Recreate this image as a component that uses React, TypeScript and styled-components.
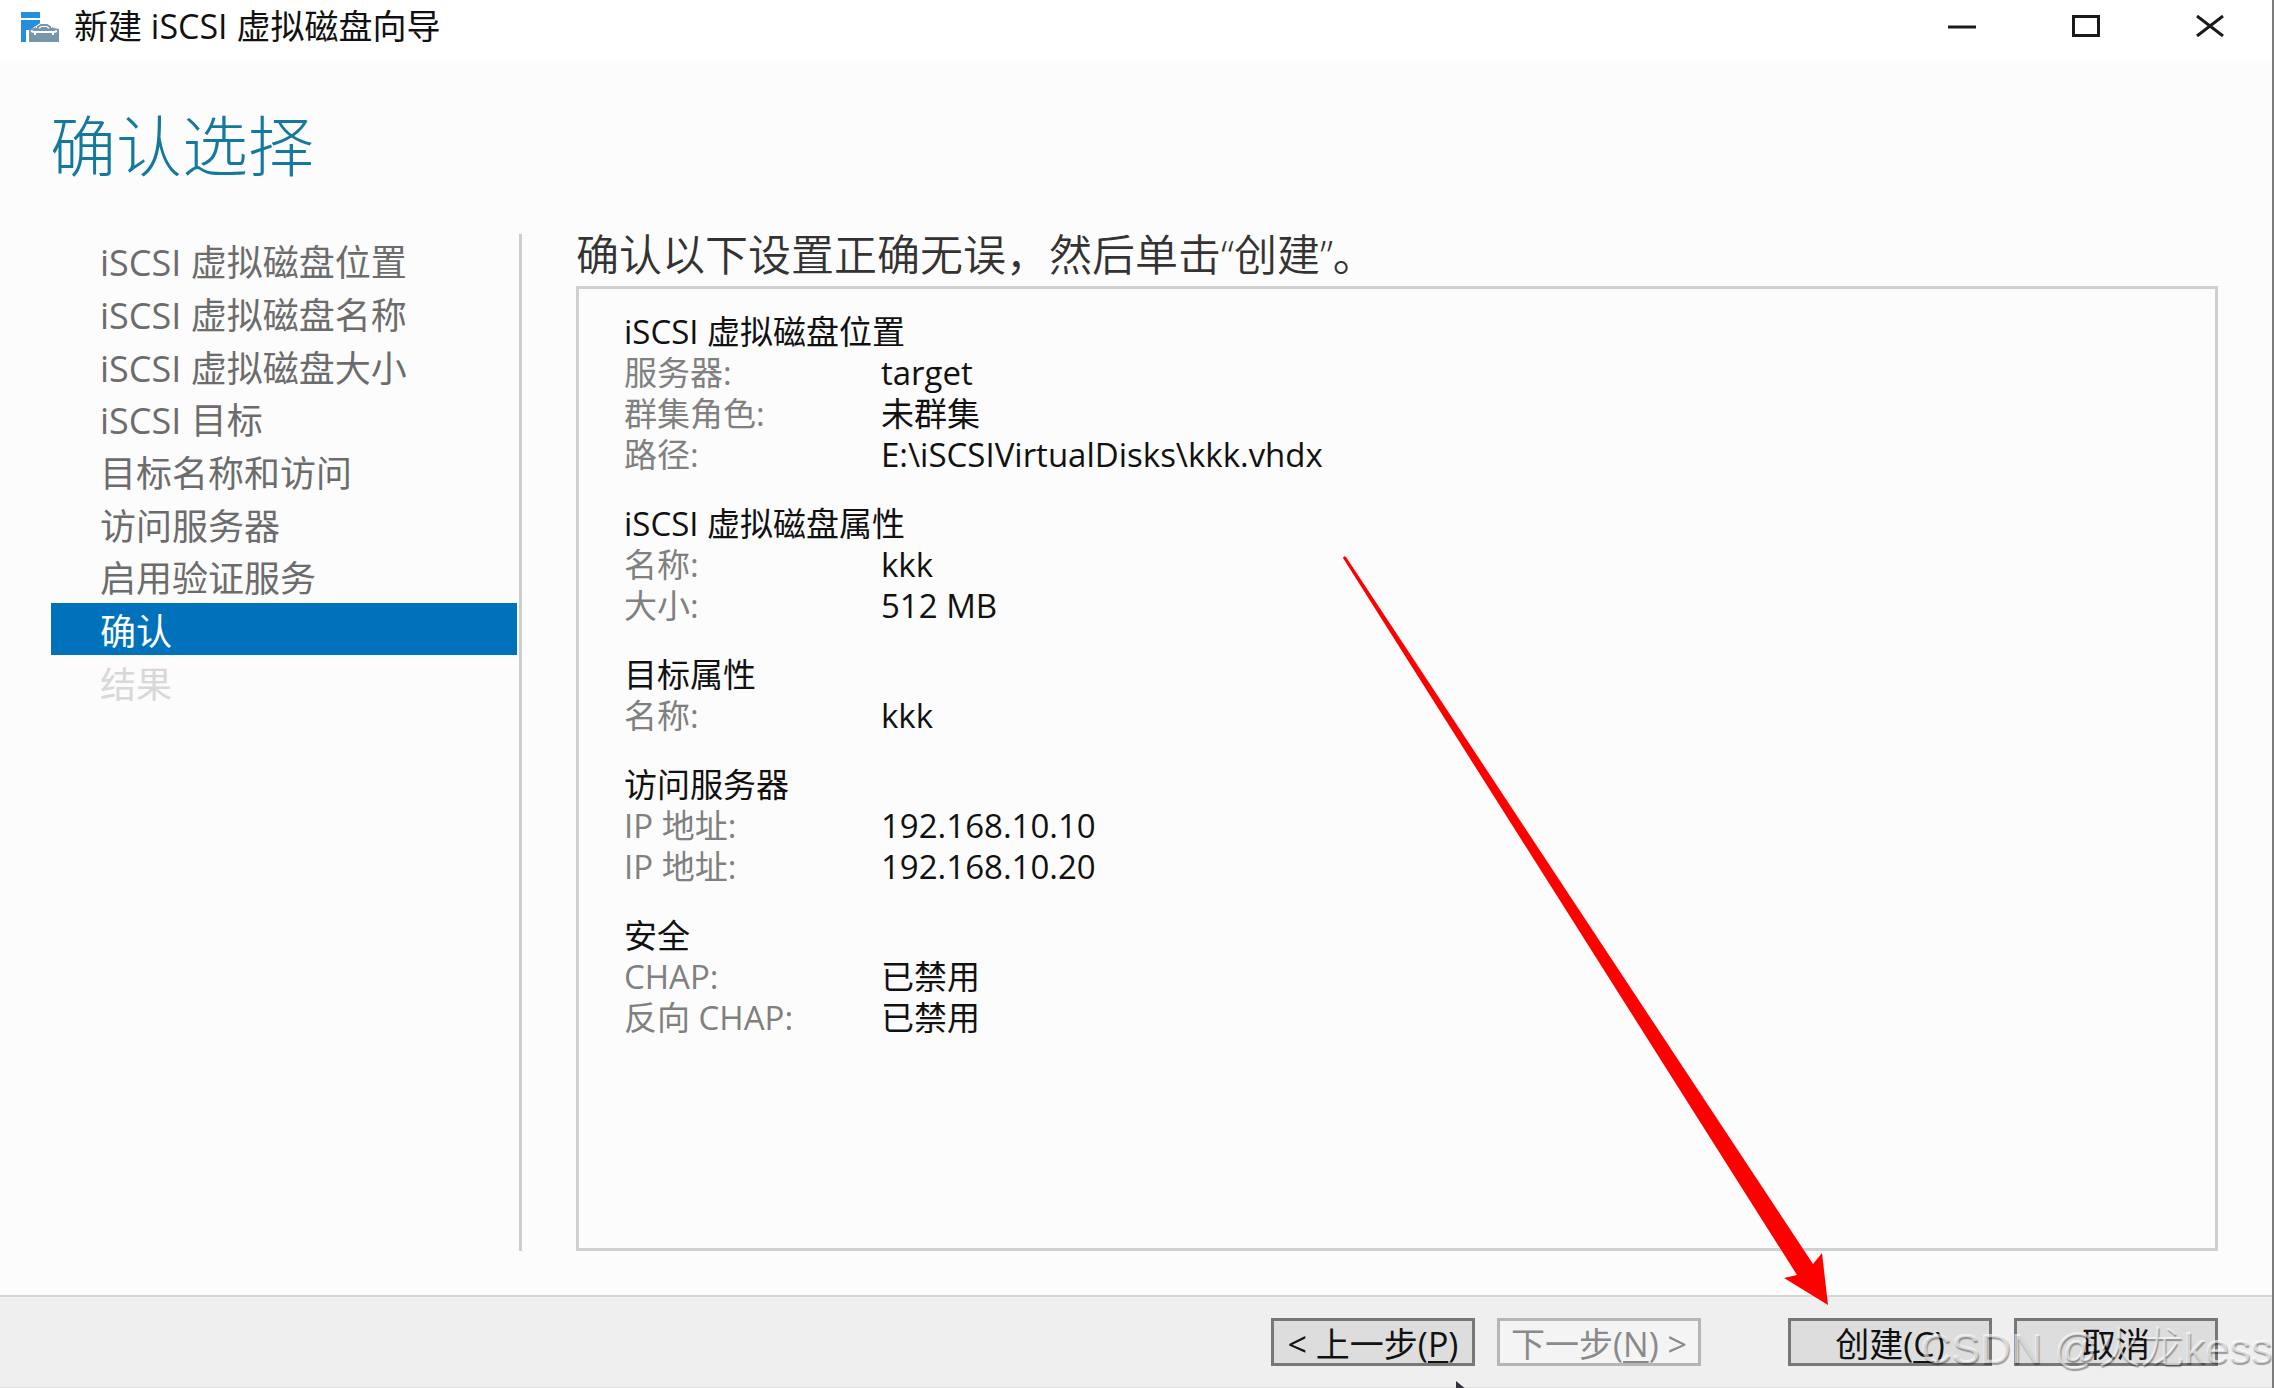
import React from "react";
import styled, { createGlobalStyle } from "styled-components";

const GlobalStyle = createGlobalStyle`
  *, *::before, *::after { box-sizing: border-box; }
  html, body { margin: 0; padding: 0; }
  body {
    font-family: "Open Sans", "Noto Sans CJK SC", sans-serif;
    color: #111;
    background: #fcfcfc;
  }
  h1, h2, p, dl, dt, dd, ol { margin: 0; padding: 0; font-weight: 400; }
`;

const Window = styled.div`
  position: relative;
  display: flex;
  flex-direction: column;
  min-height: 100vh;
  overflow: hidden;
  background: #fcfcfc;
  border-right: 2px solid #7b7b7b;
`;

const TitleBar = styled.header`
  display: flex;
  align-items: center;
  height: 61px;
  padding-left: 20px;
  background: #fff;
`;

const AppIcon = styled.svg`
  width: 40px;
  height: 32px;
  margin: 0 14px 8px 0;
`;

const AppTitle = styled.span`
  flex: 1;
  height: 54px;
  font-size: 34px;
  line-height: 44px;
`;

const CaptionButton = styled.button`
  display: flex;
  justify-content: center;
  width: 124px;
  height: 61px;
  padding: 15px 0 0;
  border: 0;
  background: transparent;
`;

const Glyph = styled.svg`
  width: 28px;
  height: 22px;
  fill: none;
  stroke: #1a1a1a;
  stroke-width: 3;
`;

const PageTitle = styled.h1`
  padding: 44px 0 0 50px;
  color: #14799c;
  font-size: 66px;
  font-weight: 300;
  line-height: 80px;
`;

const Body = styled.main`
  display: flex;
  flex: 1;
  padding: 49px 54px 44px 51px;
`;

const Steps = styled.nav`
  width: 471px;
  flex: none;
  padding-right: 2px;
  border-right: 3px solid #cdcdcd;
`;

const StepList = styled.ol`
  display: grid;
  grid-auto-rows: 1fr;
  height: 474px;
  list-style: none;
`;

type StepState = "done" | "current" | "pending";

const stepInk: Record<StepState, string> = {
  done: "#6c6c6c",
  current: "#fff",
  pending: "#d8d8d8",
};

const Step = styled.li<{ $state: StepState }>`
  display: flex;
  align-items: center;
  padding: 6px 0 0 49px;
  background: ${(p) => (p.$state === "current" ? "#0072bc" : "transparent")};
  color: ${(p) => stepInk[p.$state]};
  font-size: 36px;
  line-height: 44px;
  white-space: nowrap;
`;

const Content = styled.section`
  display: flex;
  flex: 1;
  flex-direction: column;
  min-width: 0;
  padding-left: 54px;
`;

const Instruction = styled.p`
  height: 52px;
  color: #333;
  font-size: 43px;
  font-weight: 350;
  line-height: 42px;
  white-space: nowrap;
`;

const Summary = styled.div`
  display: flex;
  flex: 1;
  flex-direction: column;
  gap: 28px;
  padding: 22px 45px;
  border: 3px solid #d0d0d0;
  font-size: 33px;
  line-height: 41px;
`;

const GroupTitle = styled.h2`
  font-size: 33px;
  line-height: 41px;
`;

const Fields = styled.dl`
  display: grid;
  grid-template-columns: 257px 1fr;
`;

const FieldName = styled.dt`
  color: #808080;
`;

const FieldValue = styled.dd`
  color: #111;
`;

const Footer = styled.footer`
  display: flex;
  justify-content: flex-end;
  gap: 22px;
  height: 93px;
  padding: 21px 54px 0;
  border-top: 2px solid #d6d6d6;
  border-bottom: 1px solid #e2e2e2;
  background: #efefef;
`;

const ButtonPair = styled.div`
  display: flex;
  gap: 22px;
  margin-right: 65px;
`;

const ActionButton = styled.button`
  display: flex;
  align-items: center;
  justify-content: center;
  width: 204px;
  height: 48px;
  padding: 4px 0 0;
  border: 3px solid #777;
  background: #ddd;
  color: #111;
  font-family: inherit;
  font-size: 34px;
  line-height: 38px;
  white-space: pre;

  &:disabled {
    border-color: #b2b6b9;
    background: #f4f4f4;
    color: #8a8a8a;
  }

  u {
    text-decoration-thickness: 2px;
    text-underline-offset: 4px;
  }
`;

const Overlay = styled.svg`
  position: absolute;
  top: 0;
  left: 0;
  width: 100%;
  height: 100%;
  pointer-events: none;
`;

const Watermark = styled.span`
  position: absolute;
  right: 0;
  bottom: 10px;
  color: rgba(255, 255, 255, 0.6);
  font-family: "Liberation Sans", "Noto Sans CJK SC", sans-serif;
  font-size: 43px;
  font-weight: 300;
  line-height: 60px;
  text-shadow: 1px 2px 1px rgba(0, 0, 0, 0.35);
  white-space: nowrap;
  pointer-events: none;
`;

const steps: { label: string; state: StepState }[] = [
  { label: "iSCSI 虚拟磁盘位置", state: "done" },
  { label: "iSCSI 虚拟磁盘名称", state: "done" },
  { label: "iSCSI 虚拟磁盘大小", state: "done" },
  { label: "iSCSI 目标", state: "done" },
  { label: "目标名称和访问", state: "done" },
  { label: "访问服务器", state: "done" },
  { label: "启用验证服务", state: "done" },
  { label: "确认", state: "current" },
  { label: "结果", state: "pending" },
];

const groups: { title: string; fields: [string, string][] }[] = [
  {
    title: "iSCSI 虚拟磁盘位置",
    fields: [
      ["服务器:", "target"],
      ["群集角色:", "未群集"],
      ["路径:", "E:\\iSCSIVirtualDisks\\kkk.vhdx"],
    ],
  },
  {
    title: "iSCSI 虚拟磁盘属性",
    fields: [
      ["名称:", "kkk"],
      ["大小:", "512 MB"],
    ],
  },
  { title: "目标属性", fields: [["名称:", "kkk"]] },
  {
    title: "访问服务器",
    fields: [
      ["IP 地址:", "192.168.10.10"],
      ["IP 地址:", "192.168.10.20"],
    ],
  },
  {
    title: "安全",
    fields: [
      ["CHAP:", "已禁用"],
      ["反向 CHAP:", "已禁用"],
    ],
  },
];

export default function App() {
  return (
    <>
      <GlobalStyle />
      <Window>
        <TitleBar>
          <AppIcon viewBox="0 0 40 32" aria-hidden="true">
            <path d="M1 1h19v6H1zM1 9h19v4l-6 3-3 3H6v12H1z" fill="#238fdd" />
            <path d="M9 19h30v12H9z" fill="#7896aa" />
            <path d="M9 18l5-1 4-2h12l4 2 5 1v3H9z" fill="#7896aa" />
            <path d="M18 17v-1l3-2h6l3 2v1" fill="none" stroke="#fff" strokeWidth="4" />
            <path d="M18 18v-2l3-2h6l3 2v2" fill="none" stroke="#7896aa" strokeWidth="2" />
            <path d="M11 20l3 1h20l3-1M15 21v3M33 21v3" fill="none" stroke="#fff" strokeWidth="2" />
          </AppIcon>
          <AppTitle>新建 iSCSI 虚拟磁盘向导</AppTitle>
          <CaptionButton aria-label="最小化">
            <Glyph viewBox="0 0 28 22"><path d="M0 12h28" /></Glyph>
          </CaptionButton>
          <CaptionButton aria-label="最大化">
            <Glyph viewBox="0 0 28 22"><path d="M1.5 1.5h25v19h-25z" /></Glyph>
          </CaptionButton>
          <CaptionButton aria-label="关闭">
            <Glyph viewBox="0 0 28 22"><path d="M1 1l26 20M27 1L1 21" /></Glyph>
          </CaptionButton>
        </TitleBar>

        <PageTitle>确认选择</PageTitle>

        <Body>
          <Steps>
            <StepList>
              {steps.map((s) => (
                <Step key={s.label} $state={s.state}>{s.label}</Step>
              ))}
            </StepList>
          </Steps>
          <Content>
            <Instruction>确认以下设置正确无误，然后单击“创建”。</Instruction>
            <Summary>
              {groups.map((g) => (
                <section key={g.title}>
                  <GroupTitle>{g.title}</GroupTitle>
                  <Fields>
                    {g.fields.map(([name, value], i) => (
                      <React.Fragment key={i}>
                        <FieldName>{name}</FieldName>
                        <FieldValue>{value}</FieldValue>
                      </React.Fragment>
                    ))}
                  </Fields>
                </section>
              ))}
            </Summary>
          </Content>
        </Body>

        <Footer>
          <ButtonPair>
            <ActionButton>{"< 上一步("}<u>P</u>)</ActionButton>
            <ActionButton disabled>下一步(<u>N</u>{") >"}</ActionButton>
          </ButtonPair>
          <ActionButton>创建(<u>C</u>)</ActionButton>
          <ActionButton>取消</ActionButton>
        </Footer>

        <Overlay aria-hidden="true">
          <path
            d="M1343 558Q1344 555 1346 557L1813 1264L1822 1253L1828 1305L1784 1278L1797 1275Z"
            fill="#f00"
          />
          <path d="M1456 1381l11 9h-11z" fill="#33333b" />
        </Overlay>
        <Watermark>CSDN @火龙kess</Watermark>
      </Window>
    </>
  );
}
